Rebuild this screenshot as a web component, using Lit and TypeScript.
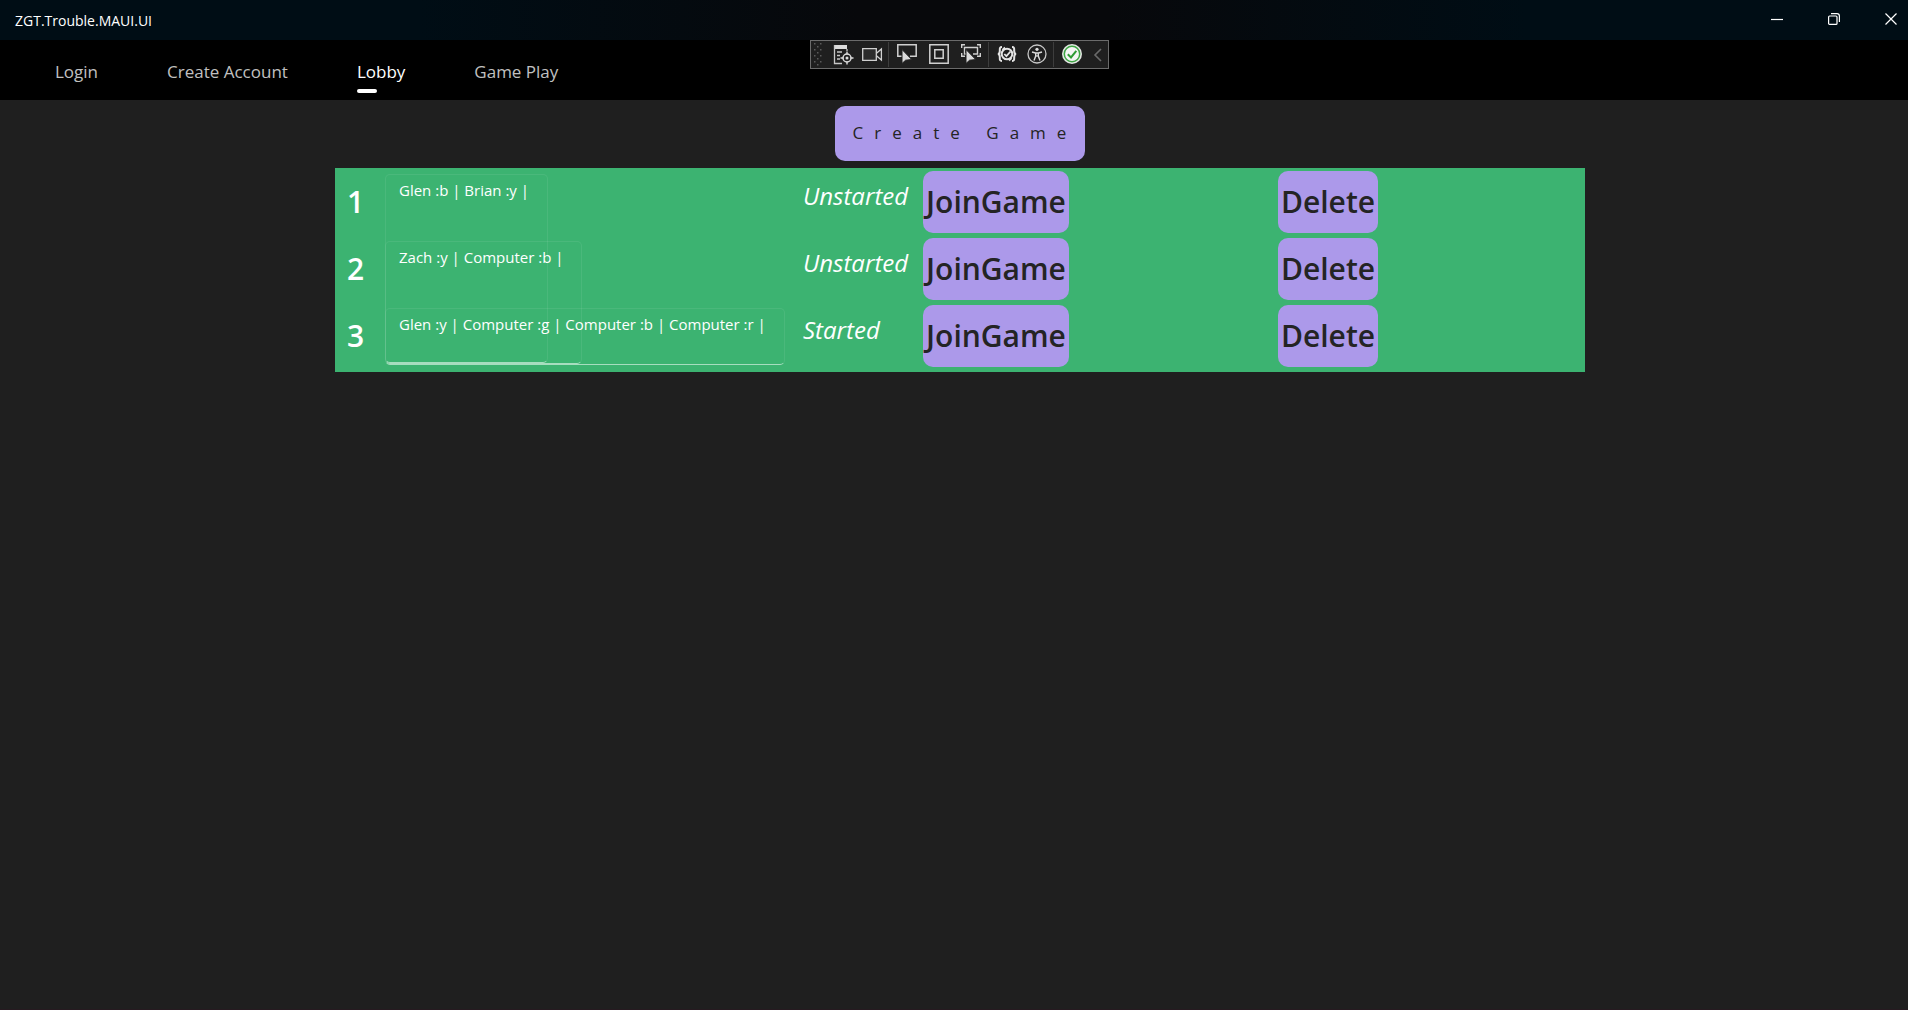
import { LitElement, html, css, svg } from "lit";
import { customElement, state } from "lit/decorators.js";

interface Game {
  id: number;
  players: string;
  status: string;
  boxHeight: number;
}

const GAMES: Game[] = [
  { id: 1, players: "Glen :b | Brian :y |", status: "Unstarted", boxHeight: 189 },
  { id: 2, players: "Zach :y | Computer :b |", status: "Unstarted", boxHeight: 123 },
  { id: 3, players: "Glen :y | Computer :g | Computer :b | Computer :r |", status: "Started", boxHeight: 57 },
];

const TABS = ["Login", "Create Account", "Lobby", "Game Play"];

const cursor = svg`<path d="M5 5.5V19.5L8.6 16.2L14.8 15.6Z" fill="#dcdcdc" stroke="#1f1f1f" stroke-width="1"/>`;

const icons = {
  tree: svg`
    <path d="M1 1h13v4h-13z" fill="#dcdcdc"/>
    <path d="M1.5 1V19.5H9M14 5V7M4 8h5M4 11.500h3M4 15h3" fill="none" stroke="#c8c8c8" stroke-width="1.300"/>
    <circle cx="14" cy="14" r="4" fill="none" stroke="#dcdcdc" stroke-width="1.500"/>
    <circle cx="14" cy="14" r="1.500" fill="#dcdcdc"/>
    <path d="M14 7.500v3M14 17.500v3M7.500 14h3M17.500 14h3" stroke="#dcdcdc" stroke-width="1.400"/>`,
  camera: svg`
    <path d="M.7 4.700H14.300V16.300H.7Z" fill="#2b2b2b" stroke="#d0d0d0" stroke-width="1.300"/>
    <path d="M14.500 9.300L19.400 5V16L14.500 11.700" fill="none" stroke="#d0d0d0" stroke-width="1.300"/>`,
  select: svg`
    <path d="M5 12.300H.8V.8H19.200V12.300H13" fill="none" stroke="#d0d0d0" stroke-width="1.500"/>${cursor}`,
  layout: svg`
    <path d="M.8 .8H19.200V19.200H.8ZM5.800 5.800H14.200V14.200H5.800Z" fill="none" stroke="#d0d0d0" stroke-width="1.500"/>`,
  track: svg`
    <path d="M.7 4V.7H4M16 .7H19.300V4M19.300 9V12.300H16M4 12.300H.7V9M5 10H3.500V3.500H16.500V10H12" fill="none" stroke="#d0d0d0" stroke-width="1.400"/>${cursor}`,
  reload: svg`
    <path d="M5 3C2.500 3 2.800 4.500 2.800 7C2.800 9.500 2 10 .8 10C2 10 2.800 10.500 2.800 13C2.800 15.500 2.500 17 5 17M15 3C17.500 3 17.200 4.500 17.200 7C17.200 9.500 18 10 19.200 10C18 10 17.200 10.500 17.200 13C17.200 15.500 17.500 17 15 17" fill="none" stroke="#e4e4e4" stroke-width="2"/>
    <circle cx="10" cy="10" r="5.300" fill="none" stroke="#e4e4e4" stroke-width="2"/>
    <path d="M5.500 6L8 3.500M14.500 14L12 16.500" stroke="#e4e4e4" stroke-width="1.800"/>
    <path d="M7.300 10L9.400 12.200L13.500 7.500" fill="none" stroke="#e4e4e4" stroke-width="1.800"/>`,
  access: svg`
    <circle cx="10" cy="10" r="9" fill="none" stroke="#c8c8c8" stroke-width="1.300"/>
    <circle cx="10" cy="5.300" r="1.600" fill="#dcdcdc"/>
    <path d="M5 8L8.500 9H11.500L15 8M8.700 9V12L7 16.500M11.300 9V12L13 16.500M9.500 12H10.500" fill="none" stroke="#dcdcdc" stroke-width="1.400"/>`,
  check: svg`
    <circle cx="10" cy="10" r="10" fill="#e4e8e4"/>
    <circle cx="10" cy="10" r="7.700" fill="#f5f5f5" stroke="#3fa545" stroke-width="1.500"/>
    <path d="M5.800 10.200L9 13.400L14.300 6.800" fill="none" stroke="#2f9b35" stroke-width="2"/>`,
  chevron: svg`<path d="M13 5L7 11L13 17" fill="none" stroke="#6a6a6a" stroke-width="1.600"/>`,
};

@customElement("debug-toolbar")
export class DebugToolbar extends LitElement {
  static styles = css`
    :host {
      display: flex;
      align-items: center;
      box-sizing: border-box;
      height: 29px;
      padding: 0 0 1px 3px;
      background: #1f1f1f;
      border: 1px solid #6b6b6b;
    }
    button {
      display: flex;
      padding: 0;
      border: 0;
      background: none;
    }
    svg {
      display: block;
      width: 20px;
      height: 20px;
      overflow: visible;
    }
    .grip {
      width: 9px;
      height: 23px;
      margin-right: 10px;
    }
    .group {
      display: flex;
      gap: 12px;
      padding: 0 7px 0 8px;
      border-left: 1px solid #3d3d3d;
      height: 25px;
      align-items: center;
    }
    .first {
      gap: 9px;
      border: 0;
      padding: 0 6px 0 0;
    }
    .tools {
      gap: 10px;
      padding-right: 6px;
    }
    .last {
      gap: 6px;
      padding: 0 0 0 8px;
    }
  `;

  private tool(label: string, icon: unknown) {
    return html`<button aria-label=${label}><svg viewBox="0 0 20 20">${icon}</svg></button>`;
  }

  render() {
    return html`
      <svg class="grip" viewBox="0 0 9 23">
        <defs>
          <pattern id="dots" width="6" height="6" patternUnits="userSpaceOnUse">
            <path d="M0 0h1.500v1.500h-1.500zM3 3h1.500v1.500h-1.500z" fill="#5a5a5a" />
          </pattern>
        </defs>
        <rect width="9" height="23" fill="url(#dots)" />
      </svg>
      <div class="group first">
        ${this.tool("Go to Live Visual Tree", icons.tree)} ${this.tool("Record", icons.camera)}
      </div>
      <div class="group">
        ${this.tool("Select Element", icons.select)} ${this.tool("Display Layout Adorners", icons.layout)}
        ${this.tool("Track Focused Element", icons.track)}
      </div>
      <div class="group tools">
        ${this.tool("Binding Failures", icons.reload)} ${this.tool("Scan for Accessibility Issues", icons.access)}
      </div>
      <div class="group last">
        ${this.tool("Hot Reload", icons.check)} ${this.tool("Collapse", icons.chevron)}
      </div>
    `;
  }
}

@customElement("app-root")
export class AppRoot extends LitElement {
  @state() private active = "Lobby";

  static styles = css`
    :host {
      display: flex;
      flex-direction: column;
      box-sizing: border-box;
      position: relative;
      min-height: 100vh;
      background: #1f1f1f;
      border-bottom: 1px solid #261a20;
      color: #fff;
      font-family: "Open Sans", "Noto Sans", sans-serif;
    }
    button,
    textarea {
      font-family: inherit;
      margin: 0;
      border: 0;
    }
    .titlebar {
      display: flex;
      align-items: center;
      justify-content: space-between;
      height: 40px;
      padding-left: 15px;
      background: linear-gradient(90deg, #000d15 22%, #07080b 45%, #07080b 58%, #000d15 80%);
      font-size: 14px;
    }
    .window {
      display: flex;
      gap: 23px;
    }
    .window button {
      display: grid;
      place-items: center;
      width: 34px;
      height: 40px;
      padding: 0 0 2px;
      background: none;
    }
    .window svg {
      width: 12px;
      height: 12px;
      fill: none;
      stroke: #fff;
      stroke-width: 1.2;
    }
    nav {
      display: flex;
      gap: 69px;
      height: 60px;
      padding-left: 55px;
      background: #000;
    }
    nav a {
      display: flex;
      flex-direction: column;
      justify-content: flex-end;
      gap: 5px;
      padding-bottom: 7px;
      color: #c0c0c0;
      font-size: 17px;
      line-height: 24px;
      text-decoration: none;
    }
    nav a::after {
      content: "";
      width: 20px;
      height: 4px;
      border-radius: 2px;
    }
    nav a.active {
      color: #fff;
    }
    nav a.active::after {
      background: #fff;
    }
    debug-toolbar {
      position: absolute;
      top: 40px;
      left: 810px;
    }
    main {
      display: flex;
      flex-direction: column;
      align-items: center;
      padding: 6px 0 0 12px;
    }
    .purple {
      background: #ac99ea;
      color: #242424;
      border-radius: 10px;
      padding: 0 0 2px;
    }
    .create {
      height: 55px;
      padding: 0 8px 2px 18px;
      font-size: 17px;
      letter-spacing: 11px;
    }
    .games {
      display: grid;
      gap: 5px;
      box-sizing: border-box;
      width: 100%;
      max-width: 1250px;
      margin: 7px 0 0;
      padding: 3px 0 5px 12px;
      background: #3cb371;
      list-style: none;
    }
    .game {
      display: grid;
      grid-template-columns: 38px 418px 120px 355px auto;
      justify-content: start;
      height: 62px;
    }
    .id {
      font-size: 30px;
      font-weight: 600;
      line-height: 62px;
    }
    .players {
      box-sizing: border-box;
      justify-self: start;
      margin-top: 3px;
      padding: 5px 18px 0 13px;
      field-sizing: content;
      resize: none;
      overflow: hidden;
      white-space: pre;
      background: none;
      border: 1px solid rgba(255, 255, 255, 0.08);
      border-bottom-color: rgba(255, 255, 255, 0.55);
      border-radius: 5px;
      color: #fff;
      font-size: 15px;
      line-height: 20px;
    }
    .status {
      font-size: 24px;
      font-style: italic;
      line-height: 50px;
    }
    .join,
    .delete {
      height: 62px;
      font-size: 30px;
      font-weight: 600;
      justify-self: start;
    }
    .join {
      width: 146px;
    }
    .delete {
      width: 100px;
    }
  `;

  private select(e: Event, tab: string) {
    e.preventDefault();
    this.active = tab;
  }

  render() {
    return html`
      <header class="titlebar">
        <span>ZGT.Trouble.MAUI.UI</span>
        <div class="window">
          <button aria-label="Minimize"><svg viewBox="0 0 12 12"><path d="M0 6.500H12" /></svg></button>
          <button aria-label="Restore">
            <svg viewBox="0 0 12 12">
              <rect x=".6" y="3" width="8.400" height="8.400" rx="1" />
              <path d="M3 .6H9Q11.400 .6 11.400 3V9" />
            </svg>
          </button>
          <button aria-label="Close"><svg viewBox="0 0 12 12"><path d="M.5 .5L11.500 11.500M11.500 .5L.5 11.500" /></svg></button>
        </div>
      </header>
      <nav>
        ${TABS.map(
          (tab) => html`<a
            href="#"
            class=${tab === this.active ? "active" : ""}
            @click=${(e: Event) => this.select(e, tab)}
            >${tab}</a
          >`
        )}
      </nav>
      <debug-toolbar></debug-toolbar>
      <main>
        <button class="purple create">Create Game</button>
        <ul class="games">
          ${GAMES.map(
            (g) => html`<li class="game">
              <span class="id">${g.id}</span>
              <textarea
                class="players"
                aria-label="Players of game ${g.id}"
                style="height:${g.boxHeight}px"
                .value=${g.players}
              ></textarea>
              <span class="status">${g.status}</span>
              <button class="purple join">JoinGame</button>
              <button class="purple delete">Delete</button>
            </li>`
          )}
        </ul>
      </main>
    `;
  }
}
